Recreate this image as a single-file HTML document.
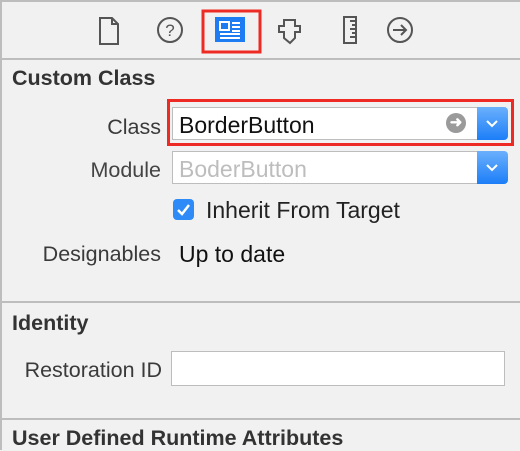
<!DOCTYPE html>
<html><head><style>
body{margin:0;width:520px;height:450px;overflow:hidden;background:#f1f1f1;font-family:"Liberation Sans",sans-serif;position:relative}
.a{position:absolute}
.lbl{position:absolute;font-size:21.5px;color:#3a3a3a;text-align:right}
.h{position:absolute;left:12px;font-weight:bold;font-size:21.5px;color:#333}
.sep{position:absolute;left:0;width:520px;height:2px;background:#bdbdbd}
.fld{position:absolute;background:#fff;border:1px solid #bdbdbd;box-sizing:border-box}
.btn{position:absolute;width:31px;background:linear-gradient(#6ab0fc,#1d7ef8);border-radius:0 4px 4px 0}
</style></head><body>
<div class="a" style="left:0;top:0;width:520px;height:2px;background:#bdbdbd"></div>
<div class="a" style="left:0;top:0;width:2px;height:450px;background:#bdbdbd"></div>
<svg class="a" style="left:0;top:0" width="520" height="60">
<g fill="none" stroke="#555" stroke-width="2">
<path d="M100 18h12l6 6v20h-18z M112 18v6h6"/>
<circle cx="170" cy="30" r="12"/>
<circle cx="400" cy="30" r="12"/>
<path d="M393 30h13 M401 25l5 5-5 5"/>
<path d="M284 20h11v6h5v6h-5v6l-5 5-6-5v-6h-5v-6h5z"/>
<path d="M344 17h12v26h-12z M350 21h6 M352 25h4 M350 29h6 M352 33h4 M350 37h6"/>
</g>
<text x="170" y="36" font-size="17" text-anchor="middle" fill="#555" font-family="Liberation Sans">?</text>
<rect x="215" y="17" width="30" height="25" fill="#1e7cf2"/>
<g fill="none" stroke="#fff" stroke-width="2"><rect x="220" y="22" width="9" height="8"/><path d="M232 23h8M232 27h8M232 31h8M220 34h20M220 38h20"/></g>
<rect x="203" y="11" width="57" height="41" fill="none" stroke="#ee2a24" stroke-width="3"/>
</svg>
<div class="sep" style="top:58px"></div>
<div class="h" style="top:66px">Custom Class</div>
<div class="a" style="left:167px;top:99px;width:347px;height:47px;box-sizing:border-box;border:3px solid #ee2a24"></div>
<div class="lbl" style="right:359px;top:115px">Class</div>
<div class="fld" style="left:172px;top:107px;width:306px;height:33px"></div>
<div class="a" style="left:179px;top:112px;font-size:23px;color:#111">BorderButton</div>
<div class="a" style="left:446px;top:113px;width:20px;height:20px;border-radius:50%;background:#9a9a9a;color:#fff;font-size:15px;text-align:center;line-height:20px;font-weight:bold">➜</div>
<div class="btn" style="left:477px;top:107px;height:33px"></div>
<svg class="a" style="left:477px;top:107px" width="31" height="33"><path d="M10 14l5 5 5-5" fill="none" stroke="#fff" stroke-width="2"/></svg>
<div class="lbl" style="right:359px;top:158px;color:#444">Module</div>
<div class="fld" style="left:172px;top:151px;width:306px;height:33px"></div>
<div class="a" style="left:179px;top:156px;font-size:23px;color:#bdbdbd">BoderButton</div>
<div class="btn" style="left:477px;top:151px;height:33px"></div>
<svg class="a" style="left:477px;top:151px" width="31" height="33"><path d="M10 14l5 5 5-5" fill="none" stroke="#fff" stroke-width="2"/></svg>
<div class="a" style="left:173px;top:199px;width:21px;height:21px;border-radius:4px;background:#2d8af6"></div>
<svg class="a" style="left:173px;top:199px" width="21" height="21"><path d="M5 11l4 4 7-9" fill="none" stroke="#fff" stroke-width="2.5"/></svg>
<div class="a" style="left:206px;top:197px;font-size:23px;color:#222">Inherit From Target</div>
<div class="lbl" style="right:359px;top:242px">Designables</div>
<div class="a" style="left:179px;top:241px;font-size:23px;color:#111">Up to date</div>
<div class="sep" style="top:301px"></div>
<div class="h" style="top:311px">Identity</div>
<div class="lbl" style="right:358px;top:358px">Restoration ID</div>
<div class="fld" style="left:171px;top:351px;width:334px;height:35px"></div>
<div class="sep" style="top:418px"></div>
<div class="h" style="top:426px">User Defined Runtime Attributes</div>
</body></html>
